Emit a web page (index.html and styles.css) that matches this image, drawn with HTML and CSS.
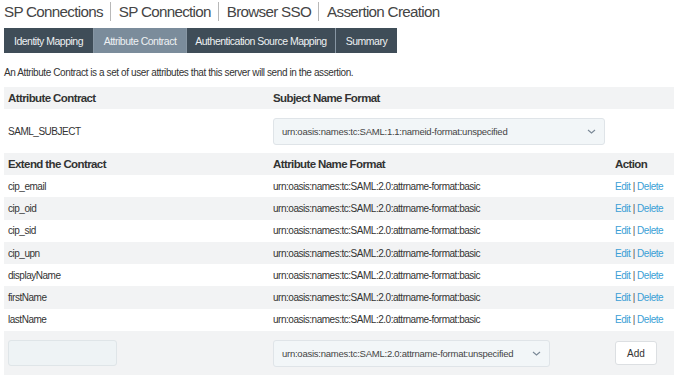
FILE: index.html
```html
<!DOCTYPE html>
<html>
<head>
<meta charset="utf-8">
<link rel="stylesheet" href="styles.css">
</head>
<body>
<div class="page">
  <h1 class="crumbs">
    <span>SP Connections</span><span class="sep"></span><span>SP Connection</span><span class="sep"></span><span>Browser SSO</span><span class="sep"></span><span>Assertion Creation</span>
  </h1>
  <nav class="tabs">
    <span class="tab t1">Identity Mapping</span>
    <span class="tab t2 active">Attribute Contract</span>
    <span class="tab t3">Authentication Source Mapping</span>
    <span class="tab t4">Summary</span>
  </nav>
  <p class="desc">An Attribute Contract is a set of user attributes that this server will send in the assertion.</p>

  <table class="grid">
    <colgroup><col class="c1"><col class="c2"><col class="c3"></colgroup>
    <tr class="head"><th>Attribute Contract</th><th colspan="2">Subject Name Format</th></tr>
    <tr class="subject">
      <td>SAML_SUBJECT</td>
      <td colspan="2"><div class="select wide"><span>urn:oasis:names:tc:SAML:1.1:nameid-format:unspecified</span><svg class="chev" width="9" height="5" viewBox="0 0 9 5"><path d="M1 1 L4.5 4 L8 1" fill="none" stroke="#7a8896" stroke-width="1.1"/></svg></div></td>
    </tr>
    <tr class="head"><th>Extend the Contract</th><th>Attribute Name Format</th><th>Action</th></tr>
    <tr class="row"><td>cip_email</td><td>urn:oasis:names:tc:SAML:2.0:attrname-format:basic</td><td><a>Edit</a> <span class="bar">|</span> <a>Delete</a></td></tr>
    <tr class="row alt"><td>cip_oid</td><td>urn:oasis:names:tc:SAML:2.0:attrname-format:basic</td><td><a>Edit</a> <span class="bar">|</span> <a>Delete</a></td></tr>
    <tr class="row"><td>cip_sid</td><td>urn:oasis:names:tc:SAML:2.0:attrname-format:basic</td><td><a>Edit</a> <span class="bar">|</span> <a>Delete</a></td></tr>
    <tr class="row alt"><td>cip_upn</td><td>urn:oasis:names:tc:SAML:2.0:attrname-format:basic</td><td><a>Edit</a> <span class="bar">|</span> <a>Delete</a></td></tr>
    <tr class="row"><td>displayName</td><td>urn:oasis:names:tc:SAML:2.0:attrname-format:basic</td><td><a>Edit</a> <span class="bar">|</span> <a>Delete</a></td></tr>
    <tr class="row alt"><td>firstName</td><td>urn:oasis:names:tc:SAML:2.0:attrname-format:basic</td><td><a>Edit</a> <span class="bar">|</span> <a>Delete</a></td></tr>
    <tr class="row"><td>lastName</td><td>urn:oasis:names:tc:SAML:2.0:attrname-format:basic</td><td><a>Edit</a> <span class="bar">|</span> <a>Delete</a></td></tr>
    <tr class="addrow">
      <td><div class="input"></div></td>
      <td><div class="select narrow"><span>urn:oasis:names:tc:SAML:2.0:attrname-format:unspecified</span><svg class="chev" width="9" height="5" viewBox="0 0 9 5"><path d="M1 1 L4.5 4 L8 1" fill="none" stroke="#7a8896" stroke-width="1.1"/></svg></div></td>
      <td><div class="btn">Add</div></td>
    </tr>
  </table>
</div>
</body>
</html>
```

FILE: styles.css
```css
html, body {
  margin: 0;
  padding: 0;
  background: #fff;
  font-family: "Liberation Sans", Arial, sans-serif;
  color: #333;
  overflow: hidden;
}
.page {
  padding: 0 0 0 4px;
}
.crumbs {
  margin: 0;
  padding-top: 2px;
  height: 26px;
  font-size: 15.2px;
  letter-spacing: -0.7px;
  font-weight: normal;
  color: #454545;
  display: flex;
  align-items: flex-start;
  line-height: 19px;
  white-space: nowrap;
}
.crumbs .sep {
  display: inline-block;
  width: 1px;
  height: 19px;
  background: #b8b8b8;
  margin: 0 8px 0 7px;
}
.tabs {
  display: flex;
  height: 25px;
}
.tab {
  display: flex;
  align-items: center;
  justify-content: center;
  background: #3f4d58;
  color: #eef1f3;
  font-size: 10.5px;
  letter-spacing: -0.5px;
  border-right: 1px solid #8796a3;
  box-sizing: border-box;
  white-space: nowrap;
}
.tab.active { background: #7b8c9b; }
.t1 { width: 90px; }
.t2 { width: 93px; }
.t3 { width: 149px; }
.t4 { width: 61px; border-right: none; }
.desc {
  margin: 0;
  padding-top: 14px;
  height: 20px;
  font-size: 10px;
  letter-spacing: -0.4px;
  color: #333;
}
.grid {
  border-collapse: collapse;
  width: 676px;
  table-layout: fixed;
  margin-top: 0;
}
.c1 { width: 265px; }
.c2 { width: 342px; }
.grid th, .grid td {
  text-align: left;
  padding: 0 0 0 4px;
  white-space: nowrap;
  overflow: hidden;
}
.grid th {
  background: #f2f3f4;
  font-size: 11.5px;
  letter-spacing: -0.6px;
  font-weight: bold;
  color: #333;
  height: 22px;
}
.grid td {
  font-size: 10px;
  letter-spacing: -0.48px;
  color: #333;
}
.subject td { height: 44px; background: #fff; }
.row td { height: 22.3px; background: #fff; }
.row.alt td { background: #f2f3f4; }
.row a { color: #3a9fd6; }
.row .bar { color: #555; }
.addrow td { height: 44px; background: #f2f3f4; vertical-align: middle; }
.select {
  display: flex;
  align-items: center;
  justify-content: space-between;
  box-sizing: border-box;
  height: 27px;
  background: #f2f6f8;
  border: 1px solid #dfe4e8;
  border-radius: 3px;
  padding: 0 8px 0 8px;
  font-size: 9.5px;
  letter-spacing: -0.25px;
  color: #444;
}
.select.wide { width: 332px; }
.select.narrow { width: 277px; }
.chev { flex: none; }
.input {
  box-sizing: border-box;
  width: 109px;
  height: 26px;
  background: #eef3f5;
  border: 1px solid #dfe5e8;
  border-radius: 3px;
}
.btn {
  box-sizing: border-box;
  width: 42px;
  height: 24px;
  background: #fff;
  border: 1px solid #dcdfe2;
  border-radius: 3px;
  display: flex;
  align-items: center;
  justify-content: center;
  font-size: 10px;
  letter-spacing: 0;
  color: #333;
}
```
